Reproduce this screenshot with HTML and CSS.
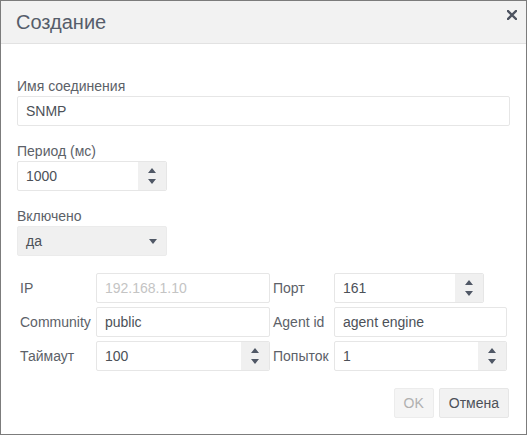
FILE: index.html
```html
<!DOCTYPE html>
<html lang="ru">
<head>
<meta charset="utf-8">
<title>Создание</title>
<link rel="stylesheet" href="styles.css">
</head>
<body>
<div class="dialog">
  <div class="header">
    <span class="title">Создание</span>
    <span class="close">
      <svg width="10" height="10" viewBox="0 0 10 10"><path d="M1 1L9 9M9 1L1 9" stroke="#4d5360" stroke-width="2.4" stroke-linecap="square"/></svg>
    </span>
  </div>
  <div class="body">
    <div class="field">
      <div class="label">Имя соединения</div>
      <div class="input full"><span class="value">SNMP</span></div>
    </div>
    <div class="field">
      <div class="label">Период (мс)</div>
      <div class="input short">
        <span class="value">1000</span>
        <span class="spin"><svg width="8" height="16" viewBox="0 0 8 16"><path d="M0 5L4 0L8 5Z M0 11L8 11L4 16Z" fill="#505866"/></svg></span>
      </div>
    </div>
    <div class="field">
      <div class="label">Включено</div>
      <div class="input short select">
        <span class="value">да</span>
        <span class="caret"><svg width="8" height="5" viewBox="0 0 8 5"><path d="M0 0L8 0L4 5Z" fill="#505866"/></svg></span>
      </div>
    </div>
    <div class="grid">
      <div class="glabel">IP</div>
      <div class="input"><span class="value placeholder">192.168.1.10</span></div>
      <div class="glabel">Порт</div>
      <div class="input port">
        <span class="value">161</span>
        <span class="spin"><svg width="8" height="16" viewBox="0 0 8 16"><path d="M0 5L4 0L8 5Z M0 11L8 11L4 16Z" fill="#505866"/></svg></span>
      </div>
      <div class="glabel">Community</div>
      <div class="input"><span class="value">public</span></div>
      <div class="glabel">Agent id</div>
      <div class="input"><span class="value">agent engine</span></div>
      <div class="glabel">Таймаут</div>
      <div class="input">
        <span class="value">100</span>
        <span class="spin"><svg width="8" height="16" viewBox="0 0 8 16"><path d="M0 5L4 0L8 5Z M0 11L8 11L4 16Z" fill="#505866"/></svg></span>
      </div>
      <div class="glabel">Попыток</div>
      <div class="input">
        <span class="value">1</span>
        <span class="spin"><svg width="8" height="16" viewBox="0 0 8 16"><path d="M0 5L4 0L8 5Z M0 11L8 11L4 16Z" fill="#505866"/></svg></span>
      </div>
    </div>
  </div>
  <div class="footer">
    <span class="btn disabled">OK</span>
    <span class="btn">Отмена</span>
  </div>
</div>
</body>
</html>
```
FILE: styles.css
```css
* { box-sizing: border-box; }
html, body { margin: 0; padding: 0; background: #fff; }
body { font-family: "Liberation Sans", Arial, sans-serif; font-size: 14px; }

.dialog {
  width: 527px;
  height: 435px;
  border: 1px solid #7c7c7c;
  background: #fff;
  display: flex;
  flex-direction: column;
}

.header {
  height: 43px;
  background: #f2f2f2;
  border-bottom: 1px solid #e2e2e2;
  display: flex;
  justify-content: space-between;
  align-items: flex-start;
  padding: 0 9px 0 15px;
}
.title {
  font-size: 20px;
  line-height: 42px;
  color: #565d6a;
}
.close {
  display: flex;
  margin-top: 9px;
}

.body {
  padding: 32px 16px 0 16px;
  display: flex;
  flex-direction: column;
}
.field { margin-bottom: 15px; }
.label {
  line-height: 20px;
  color: #5c6168;
}

.input {
  height: 30px;
  border: 1px solid #e6e6e6;
  border-radius: 2px;
  background: #fff;
  display: flex;
  align-items: center;
  overflow: hidden;
}
.value {
  flex: 1;
  padding-left: 8px;
  color: #4c5158;
  white-space: nowrap;
}
.placeholder { color: #c4c4c4; }
.short { width: 150px; }
.select { background: #f0f0f0; border-color: #ebebeb; }
.caret { display: flex; margin-right: 9px; }
.spin {
  width: 28px;
  align-self: stretch;
  background: #f0f0f0;
  display: flex;
  align-items: center;
  justify-content: center;
}

.grid {
  margin-top: 2px;
  display: grid;
  grid-template-columns: 79px 174px 64px 173px;
  grid-auto-rows: 30px;
  row-gap: 4px;
}
.glabel {
  display: flex;
  align-items: center;
  padding-left: 3px;
  color: #5c6168;
  white-space: nowrap;
}
.port { width: 150px; }

.footer {
  display: flex;
  justify-content: flex-end;
  gap: 5px;
  padding: 17px 17px 0 0;
}
.btn {
  height: 30px;
  line-height: 28px;
  padding: 0 9px;
  border: 1px solid #e6e6e6;
  border-radius: 2px;
  background: #f2f2f2;
  color: #4c5158;
}
.btn.disabled { color: #b0b0b0; background: #f5f5f5; border-color: #ececec; }
```
